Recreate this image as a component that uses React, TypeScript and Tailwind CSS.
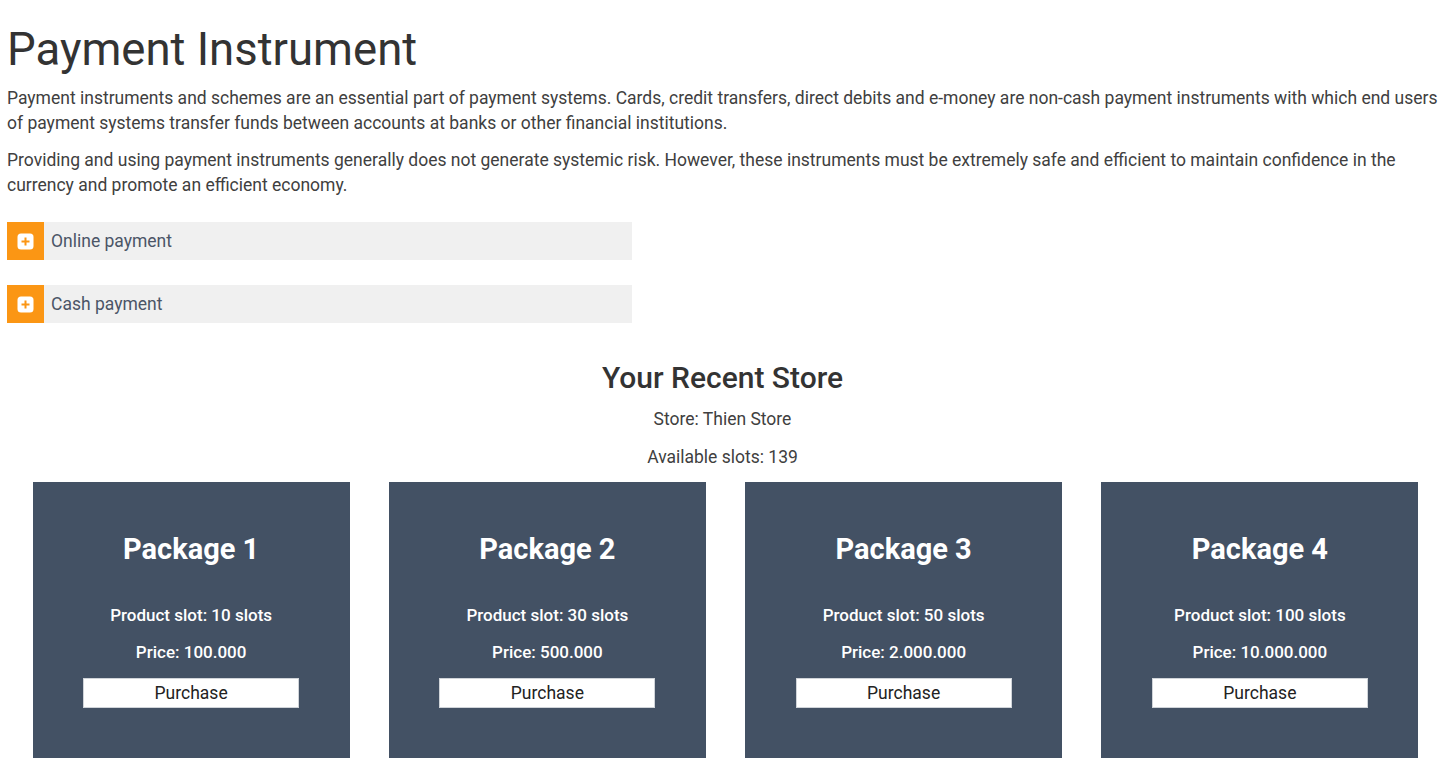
import React from 'react';

const packages = [
  { name: 'Package 1', slots: 10, price: '100.000' },
  { name: 'Package 2', slots: 30, price: '500.000' },
  { name: 'Package 3', slots: 50, price: '2.000.000' },
  { name: 'Package 4', slots: 100, price: '10.000.000' },
];

function PlusIcon() {
  return (
    <svg width="17" height="17" viewBox="0 0 17 17">
      <rect x="0.5" y="0.5" width="16" height="16" rx="3.5" fill="#fff" />
      <path d="M8.5 4.5v8M4.5 8.5h8" stroke="#fb9614" strokeWidth="2" />
    </svg>
  );
}

function AccordionItem({ label }: { label: string }) {
  return (
    <div className="flex h-[38px] w-[625px] items-center bg-[#f0f0f0]">
      <div className="flex h-full w-[37px] items-center justify-center bg-[#fb9614]">
        <PlusIcon />
      </div>
      <span className="ml-[7px] text-[17.5px] text-[#4b5567]">{label}</span>
    </div>
  );
}

export default function App() {
  return (
    <div className="min-h-screen bg-white px-[7px] font-['Roboto',sans-serif] text-[#333]">
      <h1 className="pt-[24px] text-[45.5px] font-normal leading-[52px]">Payment Instrument</h1>
      <p className="mt-[10px] text-[17.5px] leading-[25px] text-[#404040]">
        Payment instruments and schemes are an essential part of payment systems. Cards, credit transfers, direct debits and e-money are non-cash payment instruments with which end users of payment systems transfer funds between accounts at banks or other financial institutions.
      </p>
      <p className="mt-[12px] text-[17.5px] leading-[25px] text-[#404040]">
        Providing and using payment instruments generally does not generate systemic risk. However, these instruments must be extremely safe and efficient to maintain confidence in the currency and promote an efficient economy.
      </p>

      <div className="mt-[24px] flex flex-col gap-[25px]">
        <AccordionItem label="Online payment" />
        <AccordionItem label="Cash payment" />
      </div>

      <div className="mt-[37px] text-center">
        <h2 className="text-[30px] font-medium leading-[36px] text-[#333]">Your Recent Store</h2>
        <p className="mt-[11px] text-[17.5px] leading-[24px] text-[#404040]">Store: Thien Store</p>
        <p className="mt-[14px] text-[17.5px] leading-[24px] text-[#404040]">Available slots: 139</p>
      </div>

      <div className="mt-[13px] grid grid-cols-4 pl-[6px]">
        {packages.map(p => (
          <div key={p.name} className="flex justify-center">
            <div className="flex h-[276px] w-[317px] flex-col items-center bg-[#435164] text-white">
              <h3 className="mt-[49px] text-[29px] font-bold leading-[36px]">{p.name}</h3>
              <p className="mt-[36px] text-[17px] font-medium leading-[24px]">Product slot: {p.slots} slots</p>
              <p className="mt-[13px] text-[17px] font-medium leading-[24px]">Price: {p.price}</p>
              <button
                type="button"
                className="mt-[14px] h-[30px] w-[216px] border border-[#d0d4d9] bg-white text-[17.5px] text-[#222]"
              >
                Purchase
              </button>
            </div>
          </div>
        ))}
      </div>
    </div>
  );
}
